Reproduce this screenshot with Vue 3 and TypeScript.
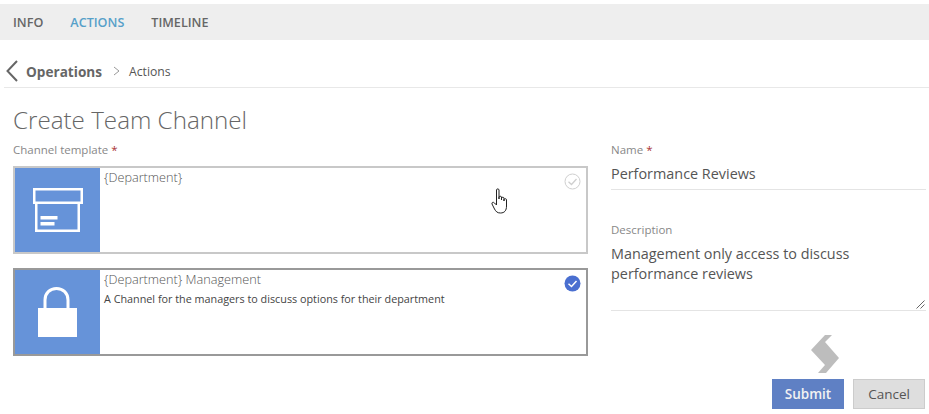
<script setup lang="ts">
interface Template {
  name: string;
  description: string;
  icon: 'box' | 'lock';
  selected: boolean;
}

const tabs = ['INFO', 'ACTIONS', 'TIMELINE'];
const templates: Template[] = [
  { name: '{Department}', description: '', icon: 'box', selected: false },
  {
    name: '{Department} Management',
    description: 'A Channel for the managers to discuss options for their department',
    icon: 'lock',
    selected: true
  }
];
</script>

<template>
  <div class="page">
    <nav class="tabs">
      <span v-for="tab in tabs" :key="tab" class="tab" :class="{ active: tab === 'ACTIONS' }">{{ tab }}</span>
    </nav>

    <div class="crumbs">
      <svg class="back" width="14" height="22" viewBox="0 0 14 22">
        <path d="M12 1 L2.5 11 L12 21" fill="none" stroke="#666" stroke-width="2" />
      </svg>
      <span class="crumb-main">Operations</span>
      <svg class="sep" width="7" height="10" viewBox="0 0 7 10">
        <path d="M1 1 L6 5 L1 9" fill="none" stroke="#999" stroke-width="1" />
      </svg>
      <span class="crumb-sub">Actions</span>
    </div>

    <h1 class="title">Create Team Channel</h1>

    <div class="form">
      <section class="left">
        <label class="label">Channel template <b>*</b></label>
        <div class="cards">
          <div v-for="t in templates" :key="t.name" class="card" :class="{ selected: t.selected }">
            <div class="card-icon">
              <svg v-if="t.icon === 'box'" width="50" height="44" viewBox="0 0 50 44">
                <rect x="1.25" y="1.25" width="47.5" height="13.5" fill="none" stroke="#fff" stroke-width="2.5" />
                <path d="M3.25 15 V42.75 H45.75 V15" fill="none" stroke="#fff" stroke-width="2.5" />
                <rect x="7.5" y="28" width="17" height="3.5" fill="#fff" />
                <rect x="7.5" y="34" width="14" height="3.5" fill="#fff" />
              </svg>
              <svg v-else width="40" height="50" viewBox="0 0 40 50">
                <path d="M7 22 V13 C7 6 12 1.5 18.5 1.5 C25 1.5 30 6 30 13 V22" fill="none" stroke="#fff" stroke-width="3" />
                <rect x="0" y="21" width="39" height="29" fill="#fff" />
              </svg>
            </div>
            <div class="card-body">
              <div class="card-name">{{ t.name }}</div>
              <div class="card-desc">{{ t.description }}</div>
            </div>
            <svg class="check" width="17" height="17" viewBox="0 0 17 17">
              <template v-if="t.selected">
                <circle cx="8.5" cy="8.5" r="8" fill="#4a6fd0" />
                <path d="M4.5 8.8 L7.5 11.5 L12.5 6" fill="none" stroke="#fff" stroke-width="1.5" />
              </template>
              <template v-else>
                <circle cx="8.5" cy="8.5" r="7.5" fill="none" stroke="#cfcfcf" stroke-width="1" />
                <path d="M4.5 8.8 L7.5 11.5 L12.5 6" fill="none" stroke="#cfcfcf" stroke-width="1.3" />
              </template>
            </svg>
          </div>
        </div>
      </section>

      <section class="right">
        <label class="label">Name <b>*</b></label>
        <div class="value name-value">Performance Reviews</div>
        <label class="label desc-label">Description</label>
        <div class="value desc-value">
          Management only access to discuss<br />performance reviews
          <svg class="grip" width="9" height="9" viewBox="0 0 9 9">
            <path d="M0.5 8.5 L8.5 0.5 M4.5 8.5 L8.5 4.5" stroke="#666" stroke-width="1" fill="none" />
          </svg>
        </div>

        <div class="footer">
          <svg class="busy" width="30" height="38" viewBox="0 0 30 38">
            <path d="M15 0 H22 L15 7 L29 23 L16 38 H8 L15 30 L1 15 Z" fill="#bdbdbd" />
          </svg>
          <div class="buttons">
            <button class="btn submit">Submit</button>
            <button class="btn cancel">Cancel</button>
          </div>
        </div>
      </section>
    </div>

    <svg class="cursor" width="19" height="26" viewBox="0 0 19 26">
      <path
        d="M5.5 2 C5.5 0.5 8 0.5 8 2 V11 V9 C8 8 10.5 8 10.5 9 V12 V10 C10.5 9 13 9 13 10 V13 V11.5 C13 10.5 15.5 10.5 15.5 11.5 V18 C15.5 22.5 13.5 25 9.5 25 C6 25 5 23.5 3.5 21 L1 16 C0.5 14.5 2 13.5 3.5 15 L5.5 17 Z"
        fill="#fff"
        stroke="#222"
        stroke-width="1"
      />
    </svg>
  </div>
</template>

<style scoped>
.page {
  position: relative;
  width: 929px;
  height: 414px;
  padding-top: 4px;
  box-sizing: border-box;
  overflow: hidden;
  background: #fff;
  font-family: "Open Sans", "Liberation Sans", sans-serif;
  color: #555;
}
.tabs {
  display: flex;
  gap: 27px;
  align-items: center;
  height: 36px;
  padding-left: 13px;
  background: #eee;
}
.tab {
  font-size: 12.6px;
  font-weight: 600;
  color: #666;
}
.tab.active {
  color: #56a0c9;
}
.crumbs {
  display: flex;
  align-items: center;
  box-sizing: border-box;
  height: 48px;
  padding-top: 15px;
  margin-left: 4px;
  border-bottom: 1px solid #e8e8e8;
}
.back {
  margin: 0 7px 0 1px;
}
.crumb-main {
  font-size: 13.6px;
  font-weight: 700;
  color: #666;
}
.sep {
  margin: 0 9px 0 11px;
}
.crumb-sub {
  font-size: 12.2px;
  color: #555;
}
.title {
  margin: 16px 0 0 13px;
  font-size: 24.2px;
  line-height: 32px;
  font-weight: 300;
  color: #666;
}
.form {
  display: flex;
  margin-top: 6px;
}
.left {
  width: 575px;
  margin-left: 13px;
}
.right {
  width: 315px;
  margin-left: 23px;
}
.label {
  display: block;
  font-size: 11.5px;
  line-height: 16px;
  color: #888;
}
.label b {
  font-weight: 400;
  color: #a33;
}
.cards {
  display: flex;
  flex-direction: column;
  gap: 14px;
  margin-top: 8px;
}
.card {
  position: relative;
  display: flex;
  height: 88px;
  box-sizing: border-box;
  border: 2px solid #c8c8c8;
}
.card.selected {
  border-color: #999;
}
.card-icon {
  display: flex;
  align-items: center;
  justify-content: center;
  width: 85px;
  background: #6693d9;
}
.card-body {
  flex: 1;
  padding: 1px 0 0 4px;
}
.card-name {
  font-size: 12.7px;
  line-height: 17px;
  font-weight: 300;
  color: #555;
}
.card-desc {
  margin-top: 3px;
  font-size: 10.8px;
  line-height: 15px;
  color: #444;
}
.check {
  position: absolute;
  top: 5px;
  right: 5px;
}
.value {
  font-size: 14.4px;
  color: #555;
  border-bottom: 1px solid #e4e4e4;
}
.name-value {
  line-height: 20px;
  padding: 6px 0 5px;
}
.desc-label {
  margin-top: 32px;
}
.desc-value {
  position: relative;
  height: 66px;
  padding-top: 6px;
  line-height: 20px;
}
.grip {
  position: absolute;
  right: 1px;
  bottom: 1px;
}
.footer {
  display: flex;
  flex-direction: column;
  align-items: flex-end;
  margin: 24px 1px 0 0;
}
.busy {
  margin-right: 85px;
}
.buttons {
  display: flex;
  gap: 9px;
  margin-top: 6px;
}
.btn {
  width: 72px;
  height: 30px;
  padding: 0;
  box-sizing: border-box;
  font-family: inherit;
  font-size: 13.5px;
  border: 1px solid;
}
.submit {
  background: #5f80c4;
  border-color: #5f80c4;
  color: #f2f2f2;
  font-weight: 600;
}
.cancel {
  background: #dedede;
  border-color: #ccc;
  color: #555;
}
.cursor {
  position: absolute;
  left: 491px;
  top: 188px;
}
</style>
